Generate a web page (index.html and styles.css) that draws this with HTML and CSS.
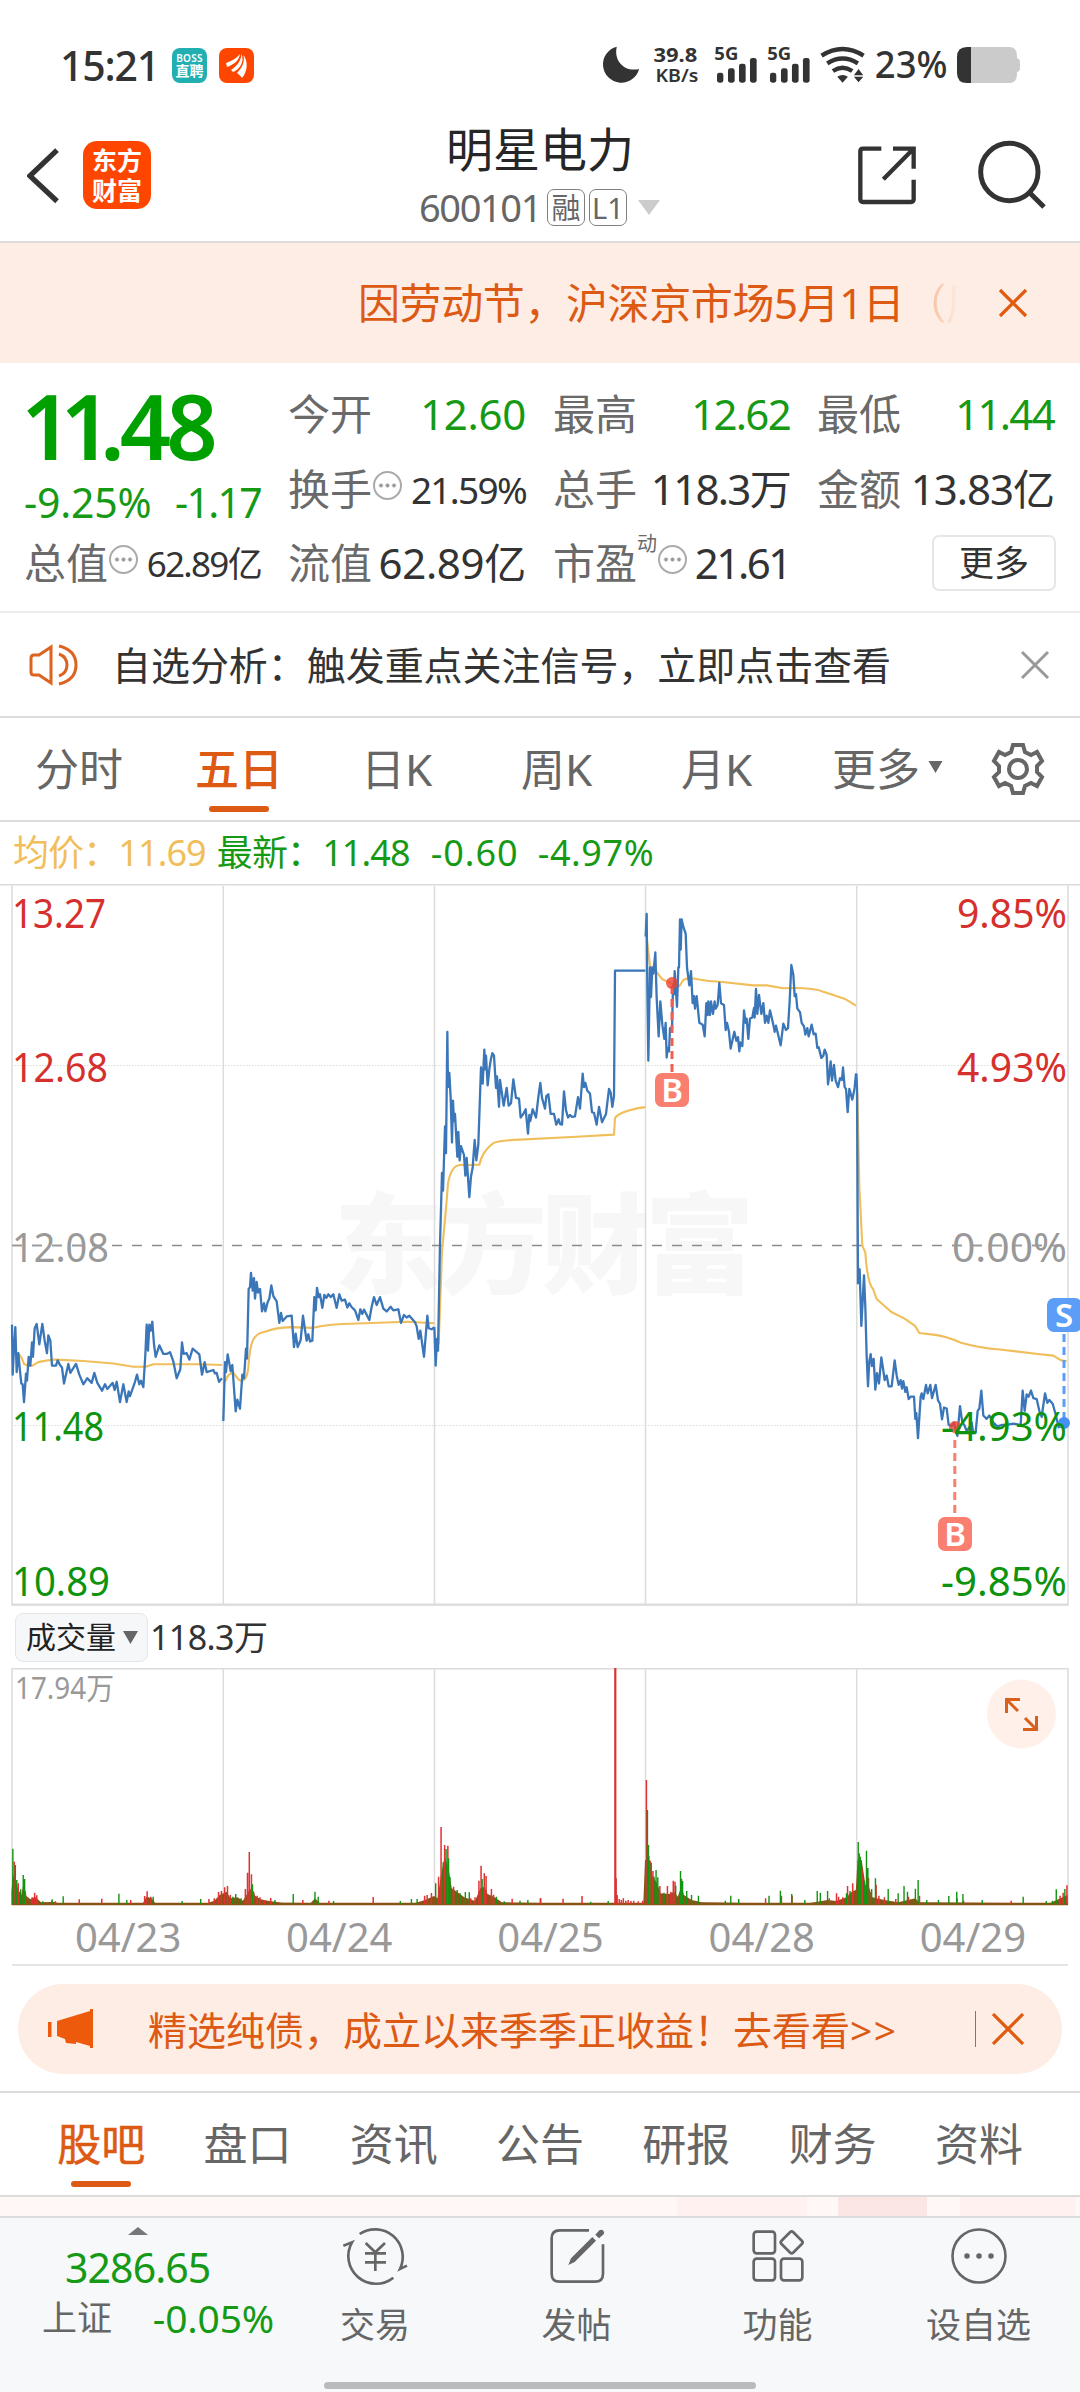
FILE: index.html
```html
<!DOCTYPE html>
<html lang="zh-CN">
<head>
<meta charset="utf-8">
<title>明星电力 600101</title>
<link rel="stylesheet" href="styles.css">
</head>
<body>
<header class="status">
  <span class="clock">15:21</span>
  <span class="app-boss"><b>BOSS</b><b>直聘</b></span>
  <svg class="app-em" viewBox="0 0 35 35"><rect width="35" height="35" rx="8" fill="#ff4600"/><path d="M7 15C13 13 18 10 21 6C20 13 14 17 8 19ZM12 22C18 18 22 13 22.500 6C26 14 20 22 14 24ZM18 25C23 20 26 14 24.500 7C29 13 29 23 23 30Q21 27 18 25Z" fill="#fff"/></svg>
  <span class="spacer"></span>
  <svg class="sys-icons" viewBox="30 40 940 130" fill="#333">
    <path d="M80 51A55 55 0 1 0 147 118C105 128 70 95 80 51Z"/>
    <g font-family="Noto Sans" font-weight="700"><text x="190" y="97" font-size="61" textLength="132" lengthAdjust="spacingAndGlyphs">39.8</text><text x="196" y="158" font-size="54" font-weight="600" textLength="129" lengthAdjust="spacingAndGlyphs">KB/s</text>
    <text x="373" y="92" font-size="53" textLength="72" lengthAdjust="spacingAndGlyphs">5G</text><text x="532" y="92" font-size="53" textLength="72" lengthAdjust="spacingAndGlyphs">5G</text></g>
    <g><rect x="381" y="129" width="19" height="30" rx="7"/><rect x="414" y="116" width="20" height="43" rx="7"/><rect x="447" y="102" width="20" height="57" rx="7"/><rect x="480" y="85" width="20" height="74" rx="7"/></g>
    <g transform="translate(159)"><rect x="381" y="129" width="19" height="30" rx="7"/><rect x="414" y="116" width="20" height="43" rx="7"/><rect x="447" y="102" width="20" height="57" rx="7"/><rect x="480" y="85" width="20" height="74" rx="7"/></g>
    <g fill="none" stroke="#333" stroke-width="13"><path d="M695 78Q758 38 821 78M712 101Q758 72 804 101M729 124Q758 105 787 124"/></g>
    <path d="M742 141Q758 131 774 141L758 159ZM792 137L806 118L820 137ZM792 141H820L806 158Z"/>
    <text x="855" y="145" font-size="112" font-family="Noto Sans" font-weight="500" textLength="218" lengthAdjust="spacingAndGlyphs">23%</text>
  </svg>
  <svg class="battery" viewBox="0 0 63 36"><path d="M10 0H52Q60 0 60 9V11Q63 12 63 15V21Q63 24 60 25V27Q60 36 52 36H10Z" fill="#cbcbcb"/><path d="M10 0H14V36H10Q0 36 0 26V10Q0 0 10 0Z" fill="#333"/></svg>
</header>

<nav class="title-bar">
  <svg class="back" viewBox="80 350 100 170"><path d="M171 358L89 436L171 513" fill="none" stroke="#333" stroke-width="16"/></svg>
  <div class="logo"><span>东方</span><span>财富</span></div>
  <div class="stock">
    <h1>明星电力</h1>
    <div class="code"><span class="num">600101</span><i>融</i><i>L1</i><svg viewBox="0 0 24 15"><path d="M1 0H23L12 15Z" fill="#ccc"/></svg></div>
  </div>
  <svg class="share" viewBox="800 345 180 180" fill="none" stroke="#333" stroke-width="13"><path d="M873 356H818Q810 356 810 364V508Q810 516 818 516H962Q970 516 970 508V449M908 356H970V416M968 358L879 448"/></svg>
  <svg class="search" viewBox="1160 330 210 210" fill="none" stroke="#333" stroke-width="15"><circle cx="1257" cy="426" r="86"/><path d="M1318 488L1361 531"/></svg>
</nav>

<section class="banner">
  <p>因劳动节，沪深京市场5月1日<span class="fade">（周</span></p>
  <svg viewBox="0 0 30 30"><path d="M2 2L28 28M28 2L2 28" stroke="#e05a10" stroke-width="3.200"/></svg>
</section>

<section class="quote">
  <div class="main"><strong><span>11</span>.48</strong><div class="chg"><span>-9.25%</span><span>-1.17</span></div></div>
  <div class="cell a"><label>今开</label><b class="g wide">12.60</b></div>
  <div class="cell b"><label>最高</label><b class="g">12.62</b></div>
  <div class="cell c"><label>最低</label><b class="g">11.44</b></div>
  <div class="cell a"><label>换手<em class="info"></em></label><b class="sm">21.59%</b></div>
  <div class="cell b"><label>总手</label><b>118.3万</b></div>
  <div class="cell c"><label>金额</label><b class="mid">13.83亿</b></div>
  <div class="cell z"><label>总值<em class="info"></em></label><b class="xs">62.89亿</b></div>
  <div class="cell a"><label>流值</label><b class="wide">62.89亿</b></div>
  <div class="cell b"><label>市盈<sup>动</sup><em class="info"></em></label><b class="tight">21.61</b></div>
  <div class="cell c end"><button>更多</button></div>
</section>

<section class="notice">
  <svg class="horn" viewBox="0 0 50 42" fill="none" stroke="#dc6420" stroke-width="3"><path d="M22 3V39L10 31H5Q2 31 2 28V14Q2 11 5 11H10ZM30 10Q38 13 38 21T30 32M30 2Q47 6 47 21T30 40"/></svg>
  <p>自选分析：触发重点关注信号，立即点击查看</p>
  <svg class="x" viewBox="0 0 30 30"><path d="M2 2L28 28M28 2L2 28" stroke="#999" stroke-width="3"/></svg>
</section>

<nav class="periods">
  <span>分时</span><span class="on">五日</span><span class="k">日K</span><span class="k">周K</span><span class="k">月K</span><span class="more">更多<svg viewBox="0 0 14 12"><path d="M0 0H14L7 12Z" fill="#666"/></svg></span>
  <svg class="gear" viewBox="-27 -27 54 54" fill="none" stroke="#666" stroke-width="4"><path d="M-5 -24H5L7 -17L13 -14L19 -17L24 -8L19 -3V3L24 8L19 17L13 14L7 17L5 24H-5L-7 17L-13 14L-19 17L-24 8L-19 3V-3L-24 -8L-19 -17L-13 -14L-7 -17Z"/><circle r="9"/></svg>
</nav>

<div class="legend"><span class="avg">均价：11.69</span><span class="last">最新：11.48</span><span class="chg-v">-0.60</span><span class="chg-p">-4.97%</span></div>

<svg class="chart" viewBox="0 884 1080 722">
  <g font-family="Noto Sans CJK SC" font-weight="900" font-size="109" fill="#f7f7f7"><text x="334" y="1285" textLength="420">东方财富</text></g>
  <g stroke="#dcdcdc" stroke-width="1.500" fill="none"><path d="M0 884.700H1080M12 884V1605H1068V884M223.300 886V1605M434.500 886V1605M645.500 886V1605M856.700 886V1605"/><path d="M12 1065.500H1068M12 1425.500H1068" stroke-dasharray="1.500 1.500" stroke-width="1"/><path d="M12 1604.500H1068" stroke-width="2"/></g>
  <path d="M12 1245.500H1068" stroke="#8c8c8c" stroke-width="1.700" stroke-dasharray="10 10"/>
  <g fill="none" stroke="#f0be5a" stroke-width="2.100" stroke-linejoin="round">
    <g transform="translate(0 880) scale(.33333 .35714)">
      <path vector-effect="non-scaling-stroke" d="M40 1320L57 1328Q65 1335 72 1355L85 1360H97L115 1350Q150 1342 170 1343L250 1347L340 1354L400 1363H437L460 1356H600L666 1358M670 1410L678 1400Q685 1380 700 1380L717 1400Q740 1410 745 1365C750 1290 760 1270 795 1265Q830 1253 870 1252L940 1254Q980 1244 1030 1243L1220 1237L1303 1241"/>
    </g>
    <g transform="translate(420 880) scale(.33333 .35714)">
      <path vector-effect="non-scaling-stroke" d="M56 1300L66 1040L78 920L84 850Q93 800 120 798H150L178 797C185 770 200 750 220 737Q230 730 300 727L470 719L582 713L585 667C593 650 650 638 676 636M680 160L690 240L707 255L727 278L755 290L778 297L790 280Q800 274 820 276Q860 284 900 285L1000 295H1040L1090 303Q1180 300 1210 313L1240 322L1275 333L1308 352"/>
    </g>
    <g transform="translate(780 880) scale(.33333 .47185)">
      <path vector-effect="non-scaling-stroke" d="M232 450L238 650L247 775L256 790Q262 855 280 868L290 888L333 915L375 930L405 945L418 960L465 964Q500 967 540 980Q600 992 660 995L780 1005L820 1008L843 1018L860 1020"/>
    </g>
  </g>
  <g fill="none" stroke="#3a76b8" stroke-width="2.300" stroke-linejoin="round">
    <g transform="translate(0 880) scale(.33333 .35714)">
      <path vector-effect="non-scaling-stroke" d="M36 1245L38 1385L42 1310L46 1252L50 1378L55 1325L60 1375L64 1410L68 1412L72 1462L78 1382L81 1402L86 1335L91 1360L96 1295L99 1335L104 1255L110 1243L118 1300L127 1243L134 1290L141 1325L145 1275L151 1290L156 1360H168L173 1345L180 1358L186 1365L192 1410L205 1355L211 1380L228 1355L238 1385L250 1412L262 1395L275 1408L283 1380L292 1408L306 1430L315 1412L322 1425L338 1408L344 1428L350 1405L360 1462L370 1412L380 1462L386 1432L390 1445L405 1405L411 1385L418 1412L423 1402L430 1420L436 1330L440 1245L444 1318L448 1245L452 1262L457 1237L462 1300L467 1335L478 1303L490 1327H500L510 1322L520 1348L530 1395L541 1370L546 1295L551 1327L560 1325L568 1343L578 1312L598 1328L606 1385L614 1350L620 1378L640 1372L645 1382L650 1380L657 1405L666 1395M670 1515L675 1350L678 1378L683 1328L692 1375L697 1358L707 1488L712 1455L720 1480L727 1385L732 1395L738 1312L741 1340L746 1145L750 1140L753 1100L758 1150L762 1115L765 1172L770 1125L774 1155L780 1145L786 1208L792 1185L796 1208L803 1182L808 1172L814 1135L820 1165L830 1180L838 1240L843 1212L848 1235L860 1222L875 1220L882 1308L887 1270L893 1308L902 1288L909 1220L915 1260L920 1290L925 1272L930 1292L937 1290L943 1168L947 1205L951 1142L956 1168L960 1160L967 1198L973 1162L979 1170L985 1160L992 1168L1000 1160L1010 1198L1018 1160L1025 1178L1035 1175L1042 1197L1048 1185L1054 1195L1065 1205L1075 1232L1081 1202L1087 1215L1092 1203L1108 1232L1115 1195L1122 1168L1130 1190L1140 1168L1150 1200L1160 1208L1172 1195L1180 1205L1195 1202L1203 1240L1212 1218L1220 1225L1228 1220L1245 1238L1250 1250L1256 1285L1261 1262L1272 1335L1282 1220L1286 1255L1295 1258L1303 1252"/>
    </g>
    <g transform="translate(420 880) scale(.33333 .35714)">
      <path vector-effect="non-scaling-stroke" d="M43 1252L47 1360L51 1285L54 1318L60 1020L66 820L69 870L75 690L78 765L82 425L84 580L88 540L92 610L96 735L99 618L102 675L105 655L112 775L115 705L119 785L123 745L132 770L136 828L140 778L148 888L153 830L158 805L164 728L169 785L175 740L183 525L188 570L193 475L196 530L198 492L203 575L208 530L212 505L217 485L222 492L228 582L231 550L237 635L240 560L251 632L260 582L266 632L273 625L280 558L288 610L297 612L302 665L310 655L317 642L324 710L328 658L331 675L338 642L348 665L355 608L361 568L366 610L375 640L379 605L385 600L392 655H402L409 685L416 670L420 683L426 685L432 592L438 645L444 665L450 658L456 663L465 662L474 608L480 640L488 542L492 580L496 568L502 590L510 598L516 650L522 652L530 685L537 635L546 678L558 655L567 585L572 595L577 635L582 605L585 254H676M677 158L680 95L682 300L685 506L690 245L693 328L697 245L700 262L706 203L710 330L716 438L721 340L727 405L733 445L737 400L740 497L743 470L747 480L750 415L756 420L759 295L762 320L764 255L771 355L775 245H777L780 110L782 195L785 110L789 128L797 150L801 245L808 295L813 255L818 345L822 325L825 360L830 325L838 400L848 405L854 438L859 345L863 378L865 340L870 378L873 340L879 375L884 340L887 360L893 350L898 288L903 345L912 350L917 420L921 400L927 425L932 472L943 425L949 450L954 440L958 480L961 455L967 465L972 365L977 400L980 388L985 445L990 388L997 385L1002 358L1004 385L1008 305L1012 375L1017 322L1024 375L1030 345L1035 400L1040 380L1045 400L1050 365L1060 405L1064 425L1068 408L1082 463L1090 402L1098 420L1104 415L1109 340L1114 238L1120 265L1124 325L1128 320L1132 360L1140 370L1145 400L1152 410L1156 433L1162 415L1166 438L1175 405L1181 432L1187 430L1192 470L1196 468L1204 498L1210 492L1214 475L1220 490L1224 572L1228 545L1232 508L1236 562L1242 518L1247 562L1254 580L1260 555L1266 560L1269 525L1274 580L1278 585L1283 650L1288 585L1297 615L1304 582L1308 542"/>
    </g>
    <g transform="translate(780 880) scale(.33333 .47185)">
      <path vector-effect="non-scaling-stroke" d="M229 410L231 440L234 855L239 825L244 945L252 838L256 905L260 1010L264 1073L268 1020L272 1005L276 1030L281 1015L286 1080L291 1045L297 1067L304 1012L309 1035L314 1060L320 1050L326 1073H335L344 1018L350 1050L356 1070L362 1060L366 1078L370 1062L376 1085L380 1075L386 1100L392 1095H402L406 1142L409 1130L414 1183L422 1095L425 1088L430 1100L438 1070L443 1088L451 1070L456 1098L467 1070L474 1103L480 1110L486 1143L492 1118L500 1120L506 1155L515 1157L522 1150L532 1178L540 1115L547 1150L553 1155L560 1168L568 1160L575 1150L580 1172L587 1170L593 1125L598 1120L604 1082L610 1135L620 1142L628 1135L640 1150L652 1158L665 1155H680L700 1152L722 1155L728 1082L734 1125L740 1090L746 1095L753 1082L760 1098L770 1100L778 1125L785 1138L795 1088L802 1108L808 1102L818 1110L826 1130L836 1160L848 1150L860 1152"/>
    </g>
  </g>
  <g font-family="Noto Sans" font-size="40">
    <g fill="#d6302e"><text x="12" y="928" textLength="94" lengthAdjust="spacingAndGlyphs">13.27</text><text x="12" y="1082" textLength="96" lengthAdjust="spacingAndGlyphs">12.68</text><text x="957" y="928" textLength="110" lengthAdjust="spacingAndGlyphs">9.85%</text><text x="957" y="1082" textLength="110" lengthAdjust="spacingAndGlyphs">4.93%</text></g>
    <g fill="#999"><text x="12" y="1262" textLength="97" lengthAdjust="spacingAndGlyphs">12.08</text><text x="952" y="1262" textLength="115" lengthAdjust="spacingAndGlyphs">0.00%</text></g>
  </g>
  <path d="M12 1245.500H104M952 1245.500H1064" stroke="#999" stroke-width="1.700" stroke-dasharray="10 10"/>
  <g stroke-width="3" stroke-dasharray="8 5"><path d="M672 986V1072" stroke="#ee6052"/><path d="M954.800 1440V1516" stroke="#f97f70"/><path d="M1064 1334V1420" stroke="#5c9df8"/></g>
  <g fill="#f0402f" fill-opacity=".8"><circle cx="672" cy="983" r="6"/><circle cx="955" cy="1427" r="6"/></g><circle cx="1064" cy="1423" r="6" fill="#4490f5"/>
  <g font-family="Noto Sans" font-size="40" fill="#0d930d"><text x="12" y="1441" textLength="92" lengthAdjust="spacingAndGlyphs">11.48</text><text x="12" y="1596" textLength="98" lengthAdjust="spacingAndGlyphs">10.89</text><text x="941" y="1441" textLength="126" lengthAdjust="spacingAndGlyphs">-4.93%</text><text x="941" y="1596" textLength="126" lengthAdjust="spacingAndGlyphs">-9.85%</text></g>
  <g font-family="Noto Sans" font-size="33" font-weight="600" fill="#fff" text-anchor="middle">
    <rect x="655" y="1073" width="34" height="34" rx="7" fill="#f97f70"/><text x="672" y="1102">B</text>
    <rect x="938" y="1517" width="34" height="34" rx="7" fill="#f97f70"/><text x="955" y="1546">B</text>
    <rect x="1047" y="1298" width="35" height="34" rx="7" fill="#5c9df8"/><text x="1064" y="1327">S</text>
  </g>
</svg>

<div class="vol-head"><span class="pick">成交量<svg viewBox="0 0 15 13"><path d="M0 0H15L7.500 13Z" fill="#666"/></svg></span><span class="val">118.3万</span></div>

<svg class="volume" viewBox="0 1668 1080 238">
  <path d="M12 1905V1668.700H1068V1905M223.300 1668V1905M434.500 1668V1905M645.500 1668V1905M856.700 1668V1905" fill="none" stroke="#dcdcdc" stroke-width="1.500"/>
  <g fill="#8a5316">
    <path transform="translate(0 1590) scale(.35714 .33333)" d="M32 943V905L36 850L44 880L52 900L60 915L66 880L74 918L85 928L98 920L115 937L150 936L165 940H400L410 920L425 925L435 940H580L600 932L615 915L635 905L645 925L665 922L680 932L690 915L698 900L706 895L715 918L730 928L750 932L790 938L870 939L882 925L895 939L1160 940L1190 930L1215 918L1225 925L1234 860L1245 800L1255 830L1265 895L1285 910L1300 922L1330 933L1345 895L1357 890L1365 912L1385 922L1405 937L1568 940V945H32Z"/>
    <path transform="translate(540 1590) scale(.34440 .33333)" d="M0 940H300L305 810H318L325 855L340 880L350 910L375 912L390 905L400 920L410 890L418 915L440 930L470 937L650 940L780 940L835 930L860 933L890 922L905 905L917 900L922 810H934L945 885L955 890L965 922L1000 930L1040 937L1090 925L1100 937L1480 940L1500 930L1532 915V945H0Z"/>
  </g>
  <path d="M12 1904H1068" stroke="#8a5316" stroke-width="2.500"/>
  <g fill="none" stroke="#e03232" stroke-width="1.500">
    <path vector-effect="non-scaling-stroke" transform="translate(0 1590) scale(.35714 .33333)" d="M40 943V815M51 943V880M71 943V905M90 943V922M97 943V908M103 943V916M145 943V932M155 943V934M222 943V928M285 943V926M366 943V930M405 943V918M412 943V904M422 943V920M585 943V927M600 943V925M612 943V906M620 943V903M629 943V892M637 943V888M645 943V915M687 943V897M693 943V848M698 943V786M704 943V853M710 943V905M720 943V917M728 943V922M740 943V930M758 943V924M848 943V930M921 943V932M1045 943V921M1189 943V917M1196 943V915M1208 943V909M1228 943V860M1235 943V711M1245 943V765M1254 943V767M1270 943V890M1318 943V925M1330 943V922M1341 943V872M1347 943V827M1356 943V850M1361 943V858M1376 943V897M1382 943V914M1434 943V926M1513 943V925"/>
    <path vector-effect="non-scaling-stroke" transform="translate(540 1590) scale(.34440 .33333)" d="M2 943V925M67 943V926M122 943V918M221 943V865M224 943V915M230 943V927M236 943V930M242 943V925M249 943V932M256 943V930M264 943V933M272 943V932M285 943V934M298 943V932M309 943V570M316 943V798M320 943V812M328 943V843M348 943V888M370 943V888M380 943V905M387 943V872M392 943V875M411 943V866M655 943V925M701 943V917M732 943V917M840 943V925M861 943V910M867 943V920M879 943V922M893 943V888M908 943V880M927 943V790M935 943V840M954 943V863M976 943V884M984 943V917M1000 943V922M1033 943V927M1070 943V920M1102 943V917M1211 943V925M1230 943V932M1368 943V932M1510 943V917M1519 943V908M1530 943V886"/>
  </g>
  <path d="M615.300 1668V1905" stroke="#d93232" stroke-width="2.200"/>
  <g fill="none" stroke="#129312" stroke-width="1.400">
    <path vector-effect="non-scaling-stroke" transform="translate(0 1590) scale(.35714 .33333)" d="M36 943V776M43 943V825M47 943V870M58 943V898M65 943V855M69 943V867M120 943V934M146 943V928M177 943V919M333 943V911M355 943V930M429 943V920M510 943V933M562 943V927M652 943V920M660 943V912M675 943V925M707 943V883M770 943V930M821 943V912M882 943V905M891 943V920M934 943V933M1121 943V933M1152 943V927M1168 943V927M1220 943V880M1241 943V817M1249 943V777M1256 943V805M1260 943V861M1280 943V900M1288 943V910M1303 943V906M1314 943V907M1350 943V867M1390 943V920M1412 943V934M1456 943V932M1478 943V930"/>
    <path vector-effect="non-scaling-stroke" transform="translate(540 1590) scale(.34440 .33333)" d="M147 943V935M198 943V933M312 943V660M315 943V765M323 943V818M331 943V860M337 943V840M342 943V862M360 943V908M394 943V887M408 943V843M414 943V873M426 943V903M440 943V915M460 943V917M538 943V932M554 943V917M577 943V927M665 943V917M698 943V902M731 943V912M769 943V930M805 943V903M814 943V908M835 943V903M890 943V910M900 943V903M924 943V756M930 943V800M942 943V872M948 943V782M952 943V834M963 943V897M974 943V865M1011 943V897M1040 943V910M1057 943V888M1067 943V905M1090 943V896M1098 943V870M1123 943V930M1157 943V930M1187 943V918M1210 943V905M1228 943V912M1284 943V930M1403 943V920M1470 943V933M1488 943V932M1499 943V898M1524 943V897"/>
  </g>
  <text x="15" y="1699" font-family="Noto Sans, Noto Sans CJK SC" font-size="30" fill="#999" textLength="99" lengthAdjust="spacingAndGlyphs">17.94万</text>
  <circle cx="1021.500" cy="1714" r="34.500" fill="#fff1ea"/>
  <path d="M1020 1699.500H1006.500V1713M1007.500 1700.500L1018 1711M1023 1729.500H1036.500V1716M1035.500 1728.500L1025 1718" fill="none" stroke="#d9601c" stroke-width="3"/>
</svg>
<div class="dates"><span>04/23</span><span>04/24</span><span>04/25</span><span>04/28</span><span>04/29</span></div>

<section class="promo">
  <svg class="mega" viewBox="0 0 45 40"><path d="M0 13H3.500V28H0ZM9 12L42 2V37L28 33V35L18 34L17 30L9 27ZM42 0H45V39H42Z" fill="#ed5a0c"/></svg>
  <p>精选纯债，成立以来季季正收益！去看看<span>&gt;&gt;</span></p>
  <i></i>
  <svg class="px" viewBox="0 0 32 32"><path d="M1 1L31 31M31 1L1 31" stroke="#e05a10" stroke-width="3.200"/></svg>
</section>

<nav class="sections"><span class="on">股吧</span><span>盘口</span><span>资讯</span><span>公告</span><span>研报</span><span>财务</span><span>资料</span></nav>
<div class="strip"></div>

<footer class="dock">
  <div class="index">
    <svg viewBox="0 0 20 8"><path d="M10 0L20 8H0Z" fill="#777"/></svg>
    <b>3286.65</b>
    <div><span>上证</span><em>-0.05%</em></div>
  </div>
  <a><svg width="70" height="63" viewBox="30 30 210 189" fill="none" stroke="#666" stroke-width="8"><path d="M89 57A83 83 0 0 1 210 162L231 152M190 188A83 83 0 0 1 66 82L40 92M107 84L136 112L165 84M136 112V168M105 115H168M105 142H168"/></svg><span>交易</span></a>
  <a><svg width="60" height="63" viewBox="650 30 180 189" fill="none" stroke="#666" stroke-width="8"><path d="M776 46H688Q664 46 664 70V176Q664 200 688 200H794Q818 200 818 176V88"/><path d="M714 150L722 130L786 66L797 77L733 141ZM795 59L807 46A9 9 0 0 1 820 58L806 70Z" fill="#666" stroke="none"/></svg><span>发帖</span></a>
  <a><svg width="60" height="63" viewBox="1254 30 180 189" fill="none" stroke="#666" stroke-width="8"><rect x="1271" y="50" width="64" height="65" rx="9"/><rect x="1271" y="131" width="64" height="65" rx="9"/><rect x="1353" y="131" width="64" height="65" rx="9"/><rect x="1360" y="57" width="50" height="50" rx="7" transform="rotate(45 1385 82)"/></svg><span>功能</span></a>
  <a><svg width="60" height="63" viewBox="0 0 60 63" fill="none" stroke="#666" stroke-width="2.600"><circle cx="30" cy="31" r="26.500"/><path d="M18 31h.01M30 31h.01M42 31h.01" stroke-width="5.500" stroke-linecap="round"/></svg><span>设自选</span></a>
  <div class="home"></div>
</footer>
</body>
</html>
```
FILE: styles.css
```css
* { box-sizing: border-box; }
body { margin: 0; width: 1080px; height: 2392px; overflow: hidden; background: #fff; color: #333; font-family: "Noto Sans", "Noto Sans CJK SC", sans-serif; line-height: 1; }
svg { display: block; flex: none; }
p, h1 { margin: 0; font-weight: 400; white-space: nowrap; }
b, i, em, strong { font-weight: 400; font-style: normal; }

.status { display: flex; align-items: center; height: 130px; padding: 0 60px; }
.clock { width: 112px; font-size: 41px; font-weight: 500; letter-spacing: -1.200px; }
.app-boss { width: 35px; height: 35px; margin-right: 12px; border-radius: 8px; background: #22afb2; color: #fff; display: flex; flex-direction: column; align-items: center; justify-content: center; gap: 1px; }
.app-boss b { font-size: 10px; font-weight: 600; letter-spacing: .3px; }
.app-boss b + b { font-size: 14px; line-height: 14px; letter-spacing: 0; }
.app-em { width: 35px; height: 35px; }
.spacer { flex: 1; }
.sys-icons { width: 313.300px; height: 43.300px; margin-right: 44px; overflow: visible; }
.battery { width: 63px; height: 36px; }

.title-bar { display: flex; align-items: center; height: 113px; padding: 0 33px 21px 27px; border-bottom: 2px solid #dcdcdc; }
.back { width: 33px; height: 57px; }
.logo { display: flex; flex-direction: column; align-items: center; justify-content: center; width: 68px; height: 68px; margin-left: 23px; border-radius: 14px; background: #ff4600; color: #fff; font-size: 25px; font-weight: 700; line-height: 30px; }
.stock { flex: 1; display: flex; flex-direction: column; align-items: center; gap: 15px; padding-left: 72px; margin-top: 2px; }
.stock h1 { font-size: 47px; line-height: 47px; color: #262626; }
.code { display: flex; align-items: center; color: #666; font-size: 38px; height: 38px; }
.code .num { letter-spacing: -1.400px; margin-right: 6px; }
.code i { display: flex; align-items: center; justify-content: center; width: 38px; height: 37px; margin-right: 4px; border: 1.500px solid #808080; border-radius: 7px; font-size: 29px; }
.code svg { width: 24px; height: 15px; margin-left: 6px; }
.share { width: 60px; height: 60px; margin-right: 60px; }
.search { width: 70px; height: 70px; }

.banner { display: flex; align-items: center; justify-content: space-between; height: 120px; padding: 0 52px 0 358px; background: #fdede4; color: #dc5a14; font-size: 42px; letter-spacing: -.400px; }
.banner p { width: 600px; overflow: hidden; line-height: 60px; }
.fade { background: linear-gradient(90deg, #f5b590 20px, #fdede4 55px); -webkit-background-clip: text; background-clip: text; color: transparent; }
.banner svg { width: 30px; height: 30px; }

.quote { display: grid; grid-template-columns: 237px 238px 237px 237px; grid-template-rows: 76px 74px 74px; column-gap: 27px; height: 250px; padding: 13px 0 0 24px; border-bottom: 2px solid #ececec; color: #333; white-space: nowrap; }
.main { grid-row: span 2; color: #00a000; }
.main strong { display: block; height: 101px; margin-left: -3px; padding-top: 4px; font-size: 90px; line-height: 90px; font-weight: 600; letter-spacing: -5px; }
.main strong span { letter-spacing: -12px; }
.chg { display: flex; justify-content: space-between; font-size: 41px; line-height: 50px; color: #169a16; letter-spacing: -.200px; }
.chg span + span { letter-spacing: -1.700px; }
.cell { display: flex; align-items: center; justify-content: space-between; font-size: 42px; }
.cell label { display: flex; align-items: center; color: #6a6a6a; }
.cell b { letter-spacing: -1.700px; }
.cell .wide { letter-spacing: -.300px; }
.cell .mid { letter-spacing: -1px; }
.cell .tight { letter-spacing: -2.400px; }
.cell .g { color: #169a16; }
.cell .sm { font-size: 37px; }
.cell .xs { font-size: 35px; }
.info { width: 29px; height: 29px; margin-left: 1px; margin-top: -8px; border: 2px solid #aaa; border-radius: 50%; background: radial-gradient(circle, #999 1.700px, transparent 2.200px) 50% 50% / 6.500px 6.500px repeat-x content-box; padding: 0 3px; }
.cell sup { align-self: flex-start; font-size: 20px; line-height: 20px; margin-top: -8px; }
.quote .end { justify-content: flex-end; }
.quote button { width: 124px; height: 56px; margin-right: -2px; padding: 0; border: 2px solid #e6e6e6; border-radius: 7px; background: #fff; color: #333; font: 35px/50px "Noto Sans", "Noto Sans CJK SC", sans-serif; }

.notice { display: flex; align-items: center; height: 105px; padding: 0 30px 0 29px; border-bottom: 2px solid #dcdcdc; font-size: 39px; }
.horn { width: 50px; height: 42px; }
.notice p { flex: 1; margin-left: 33px; letter-spacing: -.050px; }
.notice .x { width: 30px; height: 30px; }

.periods { display: flex; align-items: center; height: 104px; border-bottom: 2px solid #dcdcdc; padding-left: 35px; font-size: 44px; color: #666; }
.periods span { position: relative; width: 160px; line-height: 64px; white-space: nowrap; }
.periods .on { color: #dc5a14; font-weight: 500; }
.periods .on::after { content: ""; position: absolute; left: 14px; top: 69px; width: 60px; height: 6px; border-radius: 3px; background: #dc5a14; }
.periods .k { padding-left: 6px; }
.periods .more { display: flex; align-items: center; gap: 8px; width: 159px; margin-left: -3px; }
.periods .more svg { width: 15px; height: 12px; margin-top: -4px; }
.gear { width: 54px; height: 54px; }

.legend { display: flex; align-items: center; height: 62px; padding-left: 13px; font-size: 36px; color: #169a16; white-space: nowrap; }
.legend span { letter-spacing: -.900px; }
.legend .avg { color: #f0be5a; margin-right: 11px; }
.legend .last { margin-right: 21px; }
.legend .chg-v { letter-spacing: 1px; margin-right: 19px; }
.legend .chg-p { letter-spacing: .600px; }
.chart { width: 1080px; height: 722px; overflow: visible; }

.vol-head { display: flex; align-items: center; height: 62px; padding-left: 15px; font-size: 31px; }
.pick { display: flex; align-items: center; justify-content: space-between; width: 133px; height: 49px; padding: 0 9px 0 10px; border: 1.500px solid #e4e6ea; border-radius: 8px; background: #f6f7f9; color: #222; font-size: 30px; }
.pick svg { width: 15px; height: 13px; }
.val { margin-left: 2px; letter-spacing: -.600px; font-size: 34px; }
.volume { width: 1080px; height: 238px; }
.dates { display: flex; height: 60px; margin: 0 12px; border-bottom: 2px solid #e4e4e4; color: #999; font-size: 40px; line-height: 61px; text-align: center; }
.dates span { flex: 1; padding-left: 21px; }

.promo { display: flex; align-items: center; height: 90px; margin: 18px 18px 17px; padding: 0 38px 0 30px; border-radius: 45px; background: #fdede4; color: #dc5a14; font-size: 39px; }
.mega { width: 45px; height: 40px; }
.promo p { flex: 1; margin-left: 55px; }
.promo p span { letter-spacing: 1.500px; }
.promo i { width: 1.500px; height: 36px; margin-right: 16px; background: #dc5a14; }
.px { width: 32px; height: 32px; }

.sections { display: flex; align-items: center; height: 106px; padding-left: 28px; border: solid #dcdcdc; border-width: 2px 0; color: #666; font-size: 44px; line-height: 62px; }
.sections span { position: relative; width: 146.300px; text-align: center; }
.sections .on { color: #dc5a14; -webkit-text-stroke: .500px #dc5a14; }
.sections .on::after { content: ""; position: absolute; left: 43px; top: 68px; width: 60px; height: 6px; border-radius: 3px; background: #dc5a14; }
.strip { height: 19px; background: linear-gradient(90deg, #fff8f6 677px, #fef1ef 677px 807px, #fff8f6 807px 838px, #fce6e4 838px 927px, #fff8f6 927px 960px, #fef1ef 960px 1076px, #fff8f6 1076px); }

.dock { position: relative; display: grid; grid-template-columns: 274px 202px 201px 201px 201px; height: 176px; border-top: 2px solid #dcdcdc; background: #f7f8fa; color: #666; font-size: 35px; }
.dock a { display: flex; flex-direction: column; align-items: center; padding-top: 7px; }
.dock a span { line-height: 60px; margin-top: 7px; }
.index { padding: 9px 0 0 42px; }
.index svg { width: 20px; height: 8px; margin-left: 86px; }
.index b { display: block; margin-left: 23px; font-size: 41px; line-height: 64px; color: #169a16; letter-spacing: -.900px; }
.index div { display: flex; justify-content: space-between; align-items: center; line-height: 38px; }
.index em { font-size: 39px; color: #169a16; letter-spacing: -.200px; }
.home { position: absolute; left: 324px; bottom: 3px; width: 432px; height: 7px; border-radius: 4px; background: #b9bbbd; }
```
